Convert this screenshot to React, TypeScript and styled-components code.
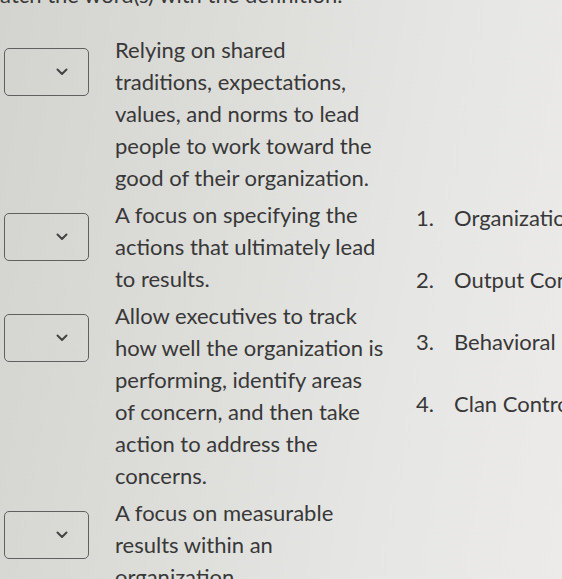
import styled, { createGlobalStyle } from "styled-components";

const GlobalStyle = createGlobalStyle`
    html, body {
        margin: 0;
        padding: 0;
    }
    body {
        width: 562px;
        height: 579px;
        overflow: hidden;
        font-family: Lato, "Open Sans", sans-serif;
        color: #383838;
        background: linear-gradient(100deg, #d3d3cf 0%, #dcdcd9 35%, #e6e6e4 70%, #ecebea 100%);
    }
`;

const definitions = [
    ["Relying on shared", "traditions, expectations,", "values, and norms to lead", "people to work toward the", "good of their organization."],
    ["A focus on specifying the", "actions that ultimately lead", "to results."],
    ["Allow executives to track", "how well the organization is", "performing, identify areas", "of concern, and then take", "action to address the", "concerns."],
    ["A focus on measurable", "results within an", "organization."],
];

const options = ["Organizational Controls", "Output Controls", "Behavioral Controls", "Clan Controls"];

function App() {
    return (
        <Page>
            <GlobalStyle />
            <Heading>Match the word(s) with the definition.</Heading>
            <Main>
                <DefinitionList>
                    {definitions.map((lines, i) => (
                        <Row key={i}>
                            <Select>
                                <svg width="12" height="8" viewBox="0 0 12 8">
                                    <path d="M1.5 1.5 L6 6 L10.5 1.5" fill="none" stroke="#444" strokeWidth="2" strokeLinecap="round" strokeLinejoin="round" />
                                </svg>
                            </Select>
                            <Definition>
                                {lines.map((l, j) => (
                                    <span key={j}>{l}<br /></span>
                                ))}
                            </Definition>
                        </Row>
                    ))}
                </DefinitionList>
                <OptionList>
                    {options.map((o, i) => (
                        <Option key={i}>
                            <Num>{i + 1}.</Num>
                            <span>{o}</span>
                        </Option>
                    ))}
                </OptionList>
            </Main>
        </Page>
    );
}

const Page = styled.div`
    width: 562px;
    height: 579px;
    overflow: hidden;
`;

const Heading = styled.h1`
    margin: -21px 0 0 -20px;
    font-size: 22px;
    font-weight: 400;
    line-height: 32px;
    white-space: nowrap;
`;

const Main = styled.div`
    display: flex;
    margin-top: 23px;
    padding-left: 4px;
`;

const DefinitionList = styled.div`
    display: flex;
    flex-direction: column;
    gap: 5px;
    width: 412px;
    flex-shrink: 0;
`;

const Row = styled.div`
    display: grid;
    grid-template-columns: 85px 1fr;
    column-gap: 26px;
    align-items: start;
`;

const Select = styled.div`
    box-sizing: border-box;
    height: 48px;
    margin-top: 14px;
    border: 1.5px solid #606060;
    border-radius: 5px;
    display: flex;
    align-items: center;
    justify-content: flex-end;
    padding-right: 20px;
`;

const Definition = styled.div`
    font-size: 22px;
    line-height: 32px;
    white-space: nowrap;
`;

const OptionList = styled.ol`
    list-style: none;
    margin: 0;
    padding: 168px 0 0 0;
    display: flex;
    flex-direction: column;
    gap: 30px;
`;

const Option = styled.li`
    display: flex;
    font-size: 22px;
    line-height: 32px;
    white-space: nowrap;
`;

const Num = styled.span`
    width: 38px;
    flex-shrink: 0;
`;

export default App;
